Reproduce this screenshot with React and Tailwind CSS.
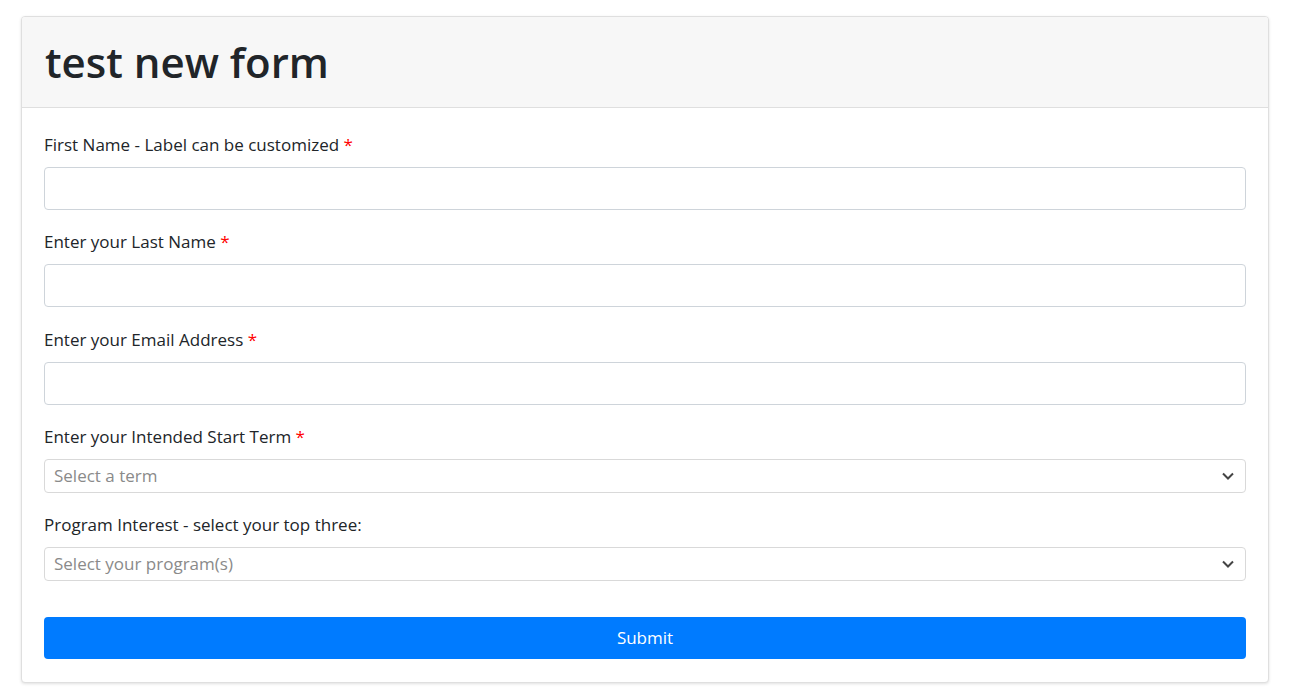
import { useState } from "react";

const FONT = { fontFamily: '"Open Sans", "Noto Sans", Arial, sans-serif' };

function Label({ children, required }) {
  return (
    <label className="mb-[10px] block text-[17px] leading-[24px] text-[#212529]">
      {children}
      {required && <span className="text-[#ff0000]"> *</span>}
    </label>
  );
}

function TextField({ label, required, value, onChange }) {
  return (
    <div className="mb-[20px]">
      <Label required={required}>{label}</Label>
      <input
        value={value}
        onChange={(e) => onChange(e.target.value)}
        className="block h-[43px] w-full rounded border border-[#ced4da] bg-white px-3 text-[17px] text-[#495057] outline-none"
      />
    </div>
  );
}

function SelectField({ label, required, placeholder }) {
  return (
    <div className="mb-[20px]">
      <Label required={required}>{label}</Label>
      <div className="flex h-[34px] w-full items-center justify-between rounded border border-[#d9d9d9] bg-white pl-[9px] pr-[10px]">
        <span className="text-[17px] text-[#8a8a8a]">{placeholder}</span>
        <svg width="14" height="14" viewBox="0 0 14 14" fill="none">
          <path d="M2 4.5 L7 9.5 L12 4.5" stroke="#444" strokeWidth="2" />
        </svg>
      </div>
    </div>
  );
}

export default function App() {
  const [first, setFirst] = useState("");
  const [last, setLast] = useState("");
  const [email, setEmail] = useState("");

  return (
    <div className="min-h-screen bg-white pl-[21px] pt-[16px]" style={FONT}>
      <div className="w-[1248px] overflow-hidden rounded border border-[#dfdfdf] bg-white shadow-[0_1px_3px_rgba(0,0,0,0.12)]">
        <div className="flex h-[91px] items-center border-b border-[#dfdfdf] bg-[#f7f7f7] px-[23px]">
          <h1 className="text-[42px] font-semibold leading-none text-[#212529]">test new form</h1>
        </div>
        <div className="px-[22px] pb-[23px] pt-[25px]">
          <TextField label="First Name - Label can be customized" required value={first} onChange={setFirst} />
          <TextField label="Enter your Last Name" required value={last} onChange={setLast} />
          <div className="pt-px">
            <TextField label="Enter your Email Address" required value={email} onChange={setEmail} />
          </div>
          <SelectField label="Enter your Intended Start Term" required placeholder="Select a term" />
          <SelectField label="Program Interest - select your top three:" placeholder="Select your program(s)" />
          <button className="mt-[36px] block h-[42px] w-full rounded bg-[#007bff] text-[17px] text-white">
            Submit
          </button>
        </div>
      </div>
    </div>
  );
}
